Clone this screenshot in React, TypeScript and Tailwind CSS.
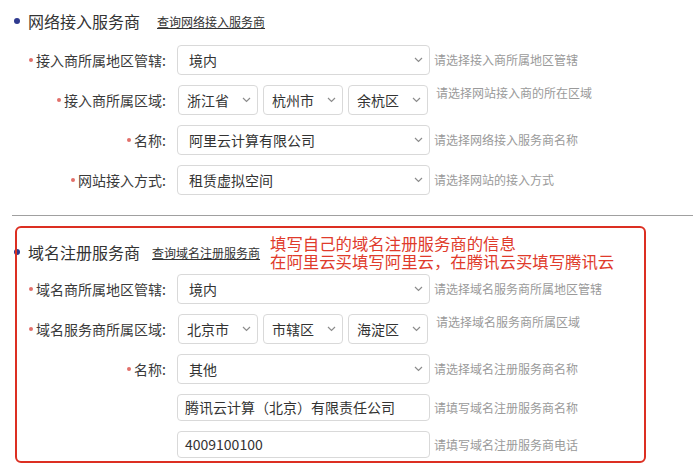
import React from 'react';

/** Small downward chevron used on the right of every select. */
function Chevron() {
  return (
    <svg width="9" height="6" viewBox="0 0 9 6" className="flex-shrink-0">
      <polyline points="1,1 4.5,4.5 8,1" fill="none" stroke="#8c8c8c" strokeWidth="1.2" />
    </svg>
  );
}

function Select({ value, className = '' }: { value: string; className?: string }) {
  return (
    <div
      className={`flex h-[30px] items-center justify-between rounded-[4px] border border-[#d9d9d9] bg-white text-[14px] text-[#333] ${className}`}
    >
      <span className="truncate">{value}</span>
      <Chevron />
    </div>
  );
}

function TextInput({ value }: { value: string }) {
  return (
    <div className="flex h-[27px] w-[253px] items-center rounded-[4px] border border-[#d9d9d9] bg-white pl-[7px] text-[14px] text-[#333]">
      {value}
    </div>
  );
}

function Label({ text, required = true }: { text: string; required?: boolean }) {
  return (
    <div className="flex w-[166px] flex-shrink-0 items-center justify-end text-[14px] text-[#3a3a3a]">
      {required && <span className="mr-[3px] h-[4px] w-[4px] rounded-full bg-[#e2706a]" />}
      <span>{text}</span>
    </div>
  );
}

function Hint({ text, top = false }: { text: string; top?: boolean }) {
  return (
    <span
      className={`text-[12px] leading-[14px] text-[#9a9a9a] ${top ? 'ml-[8px] mt-[1px] self-start' : 'ml-[4px]'}`}
    >
      {text}
    </span>
  );
}

function SelectRow({ label, value, hint }: { label: string; value: string; hint: string }) {
  return (
    <div className="flex items-center">
      <Label text={label} />
      <div className="ml-[11px]">
        <Select value={value} className="w-[253px] pl-[11px] pr-[6px]" />
      </div>
      <Hint text={hint} />
    </div>
  );
}

function RegionRow({ label, values, hint }: { label: string; values: string[]; hint: string }) {
  return (
    <div className="flex items-center">
      <Label text={label} />
      <div className="ml-[12px] flex gap-[5px]">
        {values.map((v) => (
          <Select key={v} value={v} className="w-[80px] pl-[8px] pr-[6px]" />
        ))}
      </div>
      <Hint text={hint} top />
    </div>
  );
}

function SectionHeader({
  title,
  link,
  linkGap,
  children,
}: {
  title: string;
  link: string;
  linkGap: string;
  children?: React.ReactNode;
}) {
  return (
    <div className="flex items-center">
      <span className="ml-[14px] h-[6px] w-[6px] rounded-full bg-[#2f3a8f]" />
      <span className="ml-[8px] text-[16px] leading-[20px] text-[#333]">{title}</span>
      <span className={`${linkGap} mt-[2px] text-[12px] leading-[14px] text-[#333] underline`}>{link}</span>
      {children}
    </div>
  );
}

export default function App() {
  return (
    <div className="relative h-[470px] w-[700px] overflow-hidden bg-white font-['Noto_Sans_CJK_SC','Noto_Sans',sans-serif]">
      {/* 网络接入服务商 */}
      <div className="pt-[11px]">
        <SectionHeader title="网络接入服务商" link="查询网络接入服务商" linkGap="ml-[17px]" />
        <div className="mt-[14px] flex flex-col gap-[10px]">
          <SelectRow label="接入商所属地区管辖:" value="境内" hint="请选择接入商所属地区管辖" />
          <RegionRow label="接入商所属区域:" values={['浙江省', '杭州市', '余杭区']} hint="请选择网站接入商的所在区域" />
          <SelectRow label="名称:" value="阿里云计算有限公司" hint="请选择网络接入服务商名称" />
          <SelectRow label="网站接入方式:" value="租赁虚拟空间" hint="请选择网站的接入方式" />
        </div>
      </div>

      <div className="ml-[12px] mr-[7px] mt-[20px] h-px bg-[#a0a0a0]" />

      {/* 域名注册服务商 */}
      <div className="relative mt-[18px]">
        <SectionHeader title="域名注册服务商" link="查询域名注册服务商" linkGap="ml-[12px]">
          <div className="ml-[10px] text-[16.4px] leading-[18px] text-[#e03b2c]">
            <div>填写自己的域名注册服务商的信息</div>
            <div>在阿里云买填写阿里云，在腾讯云买填写腾讯云</div>
          </div>
        </SectionHeader>
        <div className="mt-[4px] flex flex-col gap-[10px]">
          <SelectRow label="域名商所属地区管辖:" value="境内" hint="请选择域名服务商所属地区管辖" />
          <RegionRow label="域名服务商所属区域:" values={['北京市', '市辖区', '海淀区']} hint="请选择域名服务商所属区域" />
          <SelectRow label="名称:" value="其他" hint="请选择域名注册服务商名称" />
          <div className="flex items-center">
            <div className="w-[177px] flex-shrink-0" />
            <TextInput value="腾讯云计算（北京）有限责任公司" />
            <Hint text="请填写域名注册服务商名称" />
          </div>
          <div className="flex items-center">
            <div className="w-[177px] flex-shrink-0" />
            <TextInput value="4009100100" />
            <Hint text="请填写域名注册服务商电话" />
          </div>
        </div>
      </div>

      {/* red annotation frame drawn over the second section */}
      <div className="pointer-events-none absolute left-[15px] top-[226px] h-[237px] w-[631px] rounded-[6px] border-2 border-[#dc2f22]" />
    </div>
  );
}
